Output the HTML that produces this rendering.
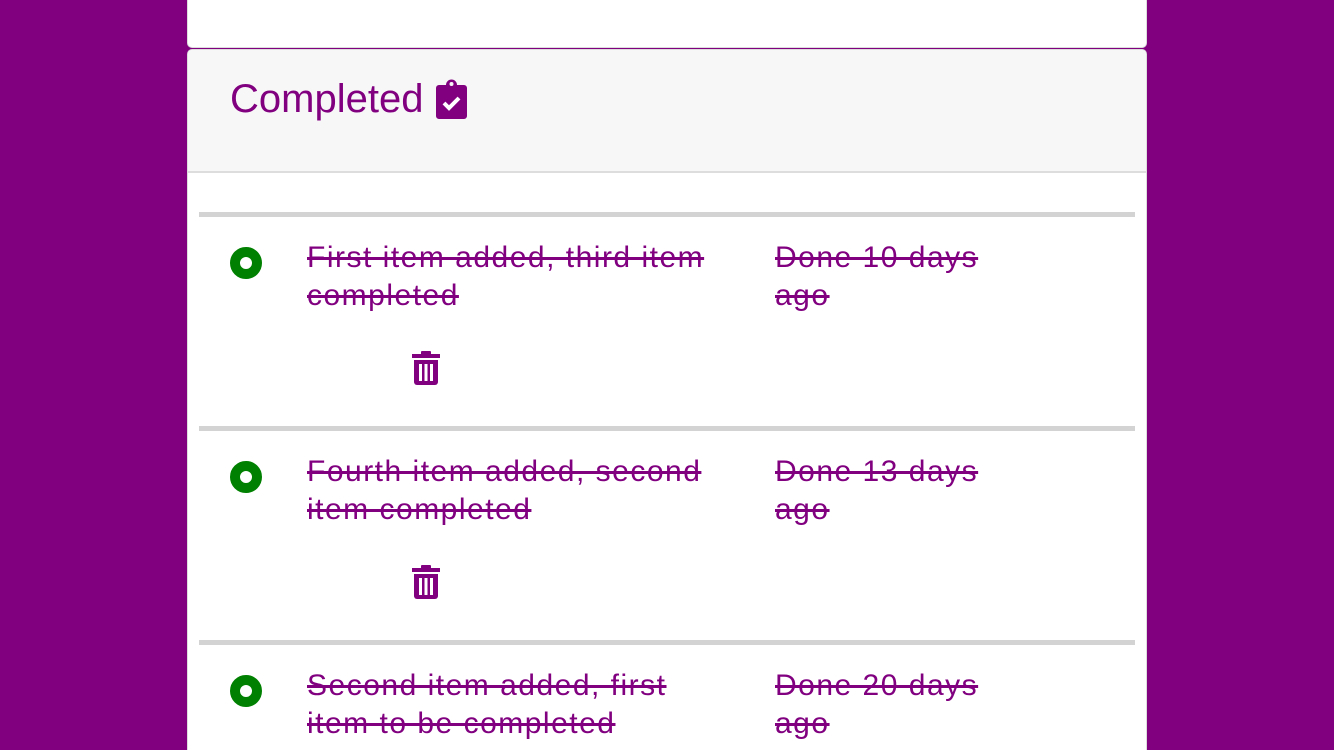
<!DOCTYPE html>
<html><head><style>
html,body{margin:0;width:1334px;height:750px;overflow:hidden}
body{background:#800080;font-family:"Liberation Sans",sans-serif;position:relative}
.top{position:absolute;left:187px;top:-10px;width:958px;height:56px;background:#fff;border:1px solid #ddd;border-radius:5px}
.card{position:absolute;left:187px;top:49px;width:958px;height:700px;background:#fff;border:1px solid #ddd;border-bottom:none;border-radius:5px 5px 0 0;overflow:hidden}
.hdr{height:121px;background:#f7f7f7;border-bottom:2px solid #ddd;position:relative}
.hdr h2{position:absolute;left:42px;top:27px;margin:0;font-weight:normal;font-size:40px;color:#800080}
.hdr svg{position:absolute;left:248px;top:29px}
.row{position:absolute;left:11px;width:936px;border-top:5px solid #d3d3d3;height:209px}
.dot{position:absolute;left:31px;top:30px;box-sizing:content-box;width:12px;height:12px;border:10px solid #008000;border-radius:50%;background:#fff}
.t{position:absolute;left:108px;top:22px;width:410px;font-size:30px;letter-spacing:1.5px;line-height:38px;color:#800080;text-decoration:line-through}
.d{position:absolute;left:576px;top:22px;width:220px;font-size:30px;letter-spacing:1.5px;line-height:38px;color:#800080;text-decoration:line-through}
.tr{position:absolute;left:213px;top:134px}
</style></head><body>
<div class="top"></div>
<div class="card">
<div class="hdr"><h2>Completed</h2>
<svg width="31" height="40" viewBox="0 0 31 40"><path d="M3 6h7a5 5 0 0 1 11 0h7a3 3 0 0 1 3 3v28a3 3 0 0 1-3 3H3a3 3 0 0 1-3-3V9a3 3 0 0 1 3-3z" fill="#800080"/><circle cx="15.5" cy="5" r="2" fill="#f7f7f7"/><path d="M8 24l5 5 10-10" stroke="#fff" stroke-width="4" fill="none"/></svg></div>
<div class="row" style="top:162px"><div class="dot"></div><div class="t">First item added, third item completed</div><div class="d">Done 10 days ago</div>
<svg class="tr" width="28" height="34" viewBox="0 0 28 34"><rect x="0" y="3" width="28" height="4" fill="#800080"/><rect x="9" y="0" width="10" height="4" rx="1" fill="#800080"/><path d="M2 9h24v22a3 3 0 0 1-3 3H5a3 3 0 0 1-3-3z" fill="#800080"/><rect x="7" y="13" width="3" height="17" fill="#fff"/><rect x="12.5" y="13" width="3" height="17" fill="#fff"/><rect x="18" y="13" width="3" height="17" fill="#fff"/></svg></div>
<div class="row" style="top:376px"><div class="dot"></div><div class="t">Fourth item added, second item completed</div><div class="d">Done 13 days ago</div>
<svg class="tr" width="28" height="34" viewBox="0 0 28 34"><rect x="0" y="3" width="28" height="4" fill="#800080"/><rect x="9" y="0" width="10" height="4" rx="1" fill="#800080"/><path d="M2 9h24v22a3 3 0 0 1-3 3H5a3 3 0 0 1-3-3z" fill="#800080"/><rect x="7" y="13" width="3" height="17" fill="#fff"/><rect x="12.5" y="13" width="3" height="17" fill="#fff"/><rect x="18" y="13" width="3" height="17" fill="#fff"/></svg></div>
<div class="row" style="top:590px;height:100px"><div class="dot"></div><div class="t">Second item added, first item to be completed</div><div class="d">Done 20 days ago</div></div>
</div>
</body></html>
